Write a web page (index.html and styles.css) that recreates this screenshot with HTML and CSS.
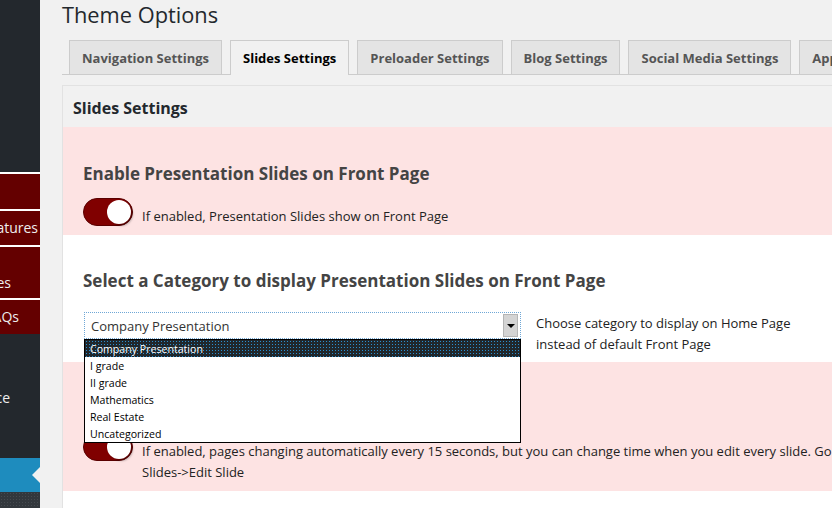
FILE: index.html
```html
<!DOCTYPE html>
<html>
<head>
<meta charset="utf-8">
<link rel="stylesheet" href="styles.css">
</head>
<body>
<div class="wp">
  <nav class="sidebar">
    <div class="sb-dark sb-top"></div>
    <div class="sb-red h35"></div>
    <div class="sb-red h34"><span class="sb-text pr2">Features</span></div>
    <div class="sb-red h51 two"><span class="sb-text pr29">Slides</span></div>
    <div class="sb-red h34"><span class="sb-text pr21">FAQs</span></div>
    <div class="sb-dark sb-mid"><span class="sb-text pr30">Appearance</span></div>
    <div class="sb-current"><span class="sb-arrow"></span></div>
    <div class="sb-bottom"></div>
  </nav>
  <main class="main">
    <h1 class="title">Theme Options</h1>
    <div class="tabs">
      <div class="tab">Navigation Settings</div>
      <div class="tab active">Slides Settings</div>
      <div class="tab">Preloader Settings</div>
      <div class="tab">Blog Settings</div>
      <div class="tab">Social Media Settings</div>
      <div class="tab">App Settings</div>
    </div>
    <div class="panel">
      <div class="panel-head">Slides Settings</div>
      <section class="section pink">
        <h3 class="opt-title">Enable Presentation Slides on Front Page</h3>
        <div class="toggle-row">
          <span class="toggle"><span class="knob"></span></span>
          <p class="opt-desc">If enabled, Presentation Slides show on Front Page</p>
        </div>
      </section>
      <section class="section white">
        <h3 class="opt-title">Select a Category to display Presentation Slides on Front Page</h3>
        <div class="select-row">
          <div class="select-wrap">
            <div class="select">
              <span class="select-value">Company Presentation</span>
              <span class="select-btn"><span class="caret"></span></span>
            </div>
            <ul class="dropdown">
              <li class="hl">Company Presentation</li>
              <li>I grade</li>
              <li>II grade</li>
              <li>Mathematics</li>
              <li>Real Estate</li>
              <li>Uncategorized</li>
            </ul>
          </div>
          <p class="select-desc">Choose category to display on Home Page<br>instead of default Front Page</p>
        </div>
      </section>
      <section class="section pink">
        <div class="opt-title-space"></div>
        <div class="toggle-row">
          <span class="toggle"><span class="knob"></span></span>
          <p class="opt-desc nowrap">If enabled, pages changing automatically every 15 seconds, but you can change time when you edit every slide. Go to<br>Slides-&gt;Edit Slide</p>
        </div>
      </section>
      <section class="section white last"></section>
    </div>
  </main>
</div>
</body>
</html>
```

FILE: styles.css
```css
* { box-sizing: border-box; }
html, body { margin: 0; padding: 0; }
body {
  width: 832px;
  height: 508px;
  overflow: hidden;
  background: #f1f1f1;
  font-family: "Open Sans", "Noto Sans", sans-serif;
}
.wp { display: flex; height: 508px; }

/* sidebar */
.sidebar {
  width: 40px;
  flex-shrink: 0;
  display: flex;
  flex-direction: column;
  background: #23282d;
  overflow: hidden;
}
.sb-dark { background: #23282d; }
.sb-top { height: 172px; flex-shrink: 0; }
.sb-red {
  flex-shrink: 0;
  background: #640000;
  border-top: 2px solid #ffffff;
  display: flex;
  justify-content: flex-end;
  align-items: center;
}
.h35 { height: 37px; }
.h34 { height: 36px; }
.h51 { height: 53px; }
.two { align-items: flex-end; padding-bottom: 6px; }
.sb-text {
  color: #eeeeee;
  font-size: 14px;
  line-height: 18px;
  white-space: nowrap;
  flex-shrink: 0;
}
.pr2 { padding-right: 2px; }
.pr29 { padding-right: 29px; }
.pr21 { padding-right: 21px; }
.pr30 { padding-right: 30px; }
.sb-mid {
  flex-shrink: 0;
  height: 124px;
  display: flex;
  justify-content: flex-end;
  align-items: flex-start;
  padding-top: 55px;
}
.sb-current {
  flex-shrink: 0;
  height: 34px;
  background: #1e8cbe;
  display: flex;
  justify-content: flex-end;
  align-items: center;
}
.sb-arrow {
  width: 0; height: 0;
  border-top: 8px solid transparent;
  border-bottom: 8px solid transparent;
  border-right: 8px solid #f1f1f1;
}
.sb-bottom {
  flex: 1;
  background-color: #32373c;
  background-image: radial-gradient(#454a4f 0.7px, transparent 0.8px);
  background-size: 3px 3px;
}

/* main */
.main {
  flex: 1;
  min-width: 0;
  padding-left: 22px;
  overflow: hidden;
}
.title {
  margin: 0;
  font-size: 21.8px;
  line-height: 29px;
  font-weight: 400;
  color: #23282d;
}
.tabs {
  margin-top: 11px;
  display: flex;
  gap: 8px;
  padding-left: 7px;
  border-bottom: 1px solid #cccccc;
  height: 35px;
}
.tab {
  flex-shrink: 0;
  height: 34px;
  padding: 0 12px;
  border: 1px solid #cccccc;
  border-bottom: none;
  background: #e4e4e4;
  color: #555555;
  font-size: 13px;
  font-weight: 700;
  line-height: 35px;
  white-space: nowrap;
}
.tab.active {
  background: #f1f1f1;
  color: #000000;
  height: 35px;
}

.panel {
  margin-top: 10px;
  border: 1px solid #e2e2e2;
  border-right: none;
  width: 790px;
}
.panel-head {
  height: 41px;
  padding: 3px 0 0 10px;
  font-size: 16px;
  font-weight: 700;
  line-height: 38px;
  color: #23282d;
}
.section { padding: 34px 0 8px 20px; }
.section.white { padding-top: 33px; padding-bottom: 7px; background: #ffffff; }
.section.pink { background: #fde3e3; }
.section.last { height: 40px; }
.opt-title {
  margin: 0;
  font-size: 17px;
  line-height: 26px;
  font-weight: 700;
  color: #444444;
}
.opt-title-space { height: 26px; }
.toggle-row {
  margin-top: 11px;
  display: flex;
  align-items: flex-start;
  gap: 9px;
}
.toggle {
  position: relative;
  flex-shrink: 0;
  width: 50px;
  height: 28px;
  border-radius: 14px;
  background: #800000;
  border: 1px solid #5a0000;
}
.knob {
  position: absolute;
  right: 1px;
  top: 1px;
  width: 24px;
  height: 24px;
  border-radius: 50%;
  background: #ffffff;
  box-shadow: 2px 2px 2px rgba(0,0,0,0.25);
}
.opt-desc {
  margin: 8px 0 0;
  font-size: 13px;
  line-height: 21px;
  color: #222222;
}
.nowrap { white-space: nowrap; }

.select-row {
  margin-top: 18px;
  display: flex;
  align-items: flex-start;
  gap: 15px;
}
.select-wrap {
  position: relative;
  width: 437px;
  margin-left: 1px;
  flex-shrink: 0;
}
.select {
  height: 27px;
  display: flex;
  align-items: center;
  border: 1px dotted #6fa7d6;
  background: #ffffff;
}
.select-value {
  flex: 1;
  padding: 1px 0 0 6px;
  font-size: 13px;
  color: #333333;
}
.select-btn {
  width: 15px;
  height: 23px;
  margin-right: 2px;
  background: #d4d4d4;
  border: 1px solid #b5b5b5;
  display: flex;
  align-items: center;
  justify-content: center;
}
.caret {
  width: 0; height: 0;
  border-left: 4px solid transparent;
  border-right: 4px solid transparent;
  border-top: 4px solid #000000;
}
.dropdown {
  position: absolute;
  left: 0;
  top: 27px;
  width: 437px;
  margin: 0;
  padding: 0;
  list-style: none;
  background: #ffffff;
  border: 1px solid #000000;
  z-index: 5;
}
.dropdown li {
  height: 17px;
  padding-left: 5px;
  font-size: 10.6px;
  line-height: 18px;
  color: #000000;
}
.dropdown li.hl {
  color: #ffffff;
  background-color: #20272c;
  background-image: radial-gradient(#2a8fd0 0.6px, transparent 0.8px);
  background-size: 3px 3px;
}
.select-desc {
  margin: 1px 0 0;
  font-size: 13px;
  line-height: 21px;
  color: #222222;
}
```
